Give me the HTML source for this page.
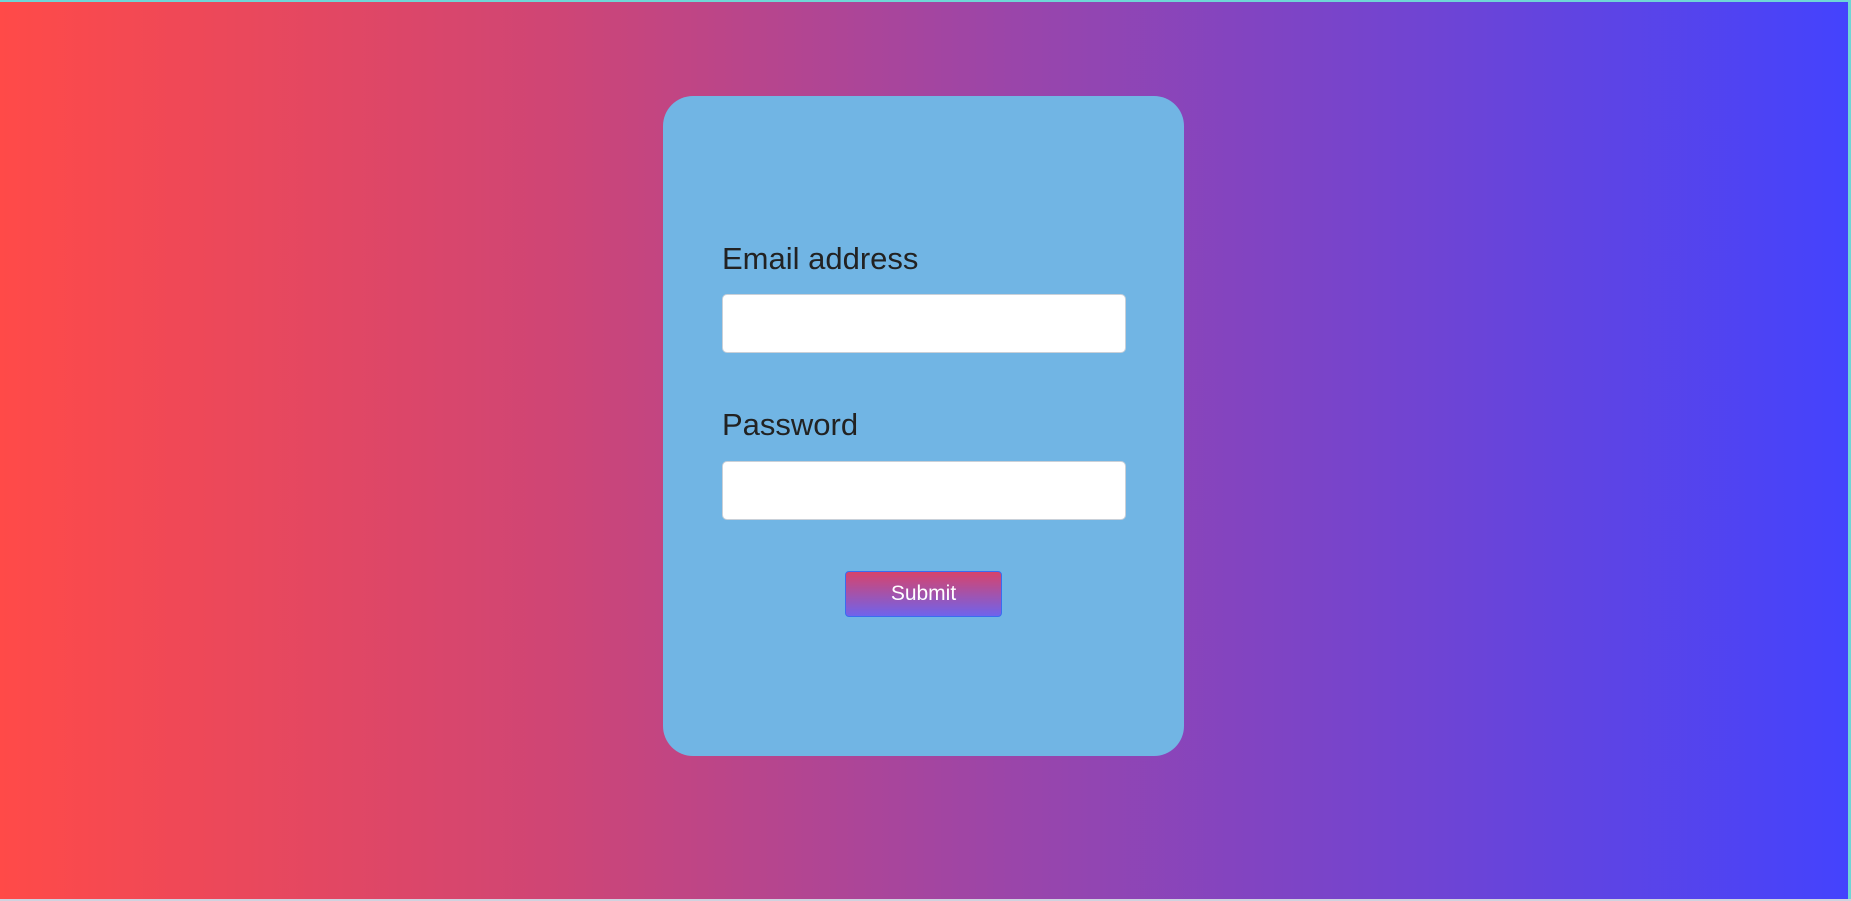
<!DOCTYPE html>
<html><head><style>
html,body{margin:0;padding:0;width:1851px;height:901px;overflow:hidden;background:#6fd6d6;}
.bg{position:absolute;left:0;top:2px;width:1848px;height:897px;background:linear-gradient(to right,#ff4a48,#cf4575 30%,#9a45aa 55%,#4443fd);}
.bot{position:absolute;left:0;top:899px;width:1851px;height:2px;background:#cfd3e0;}
.card{position:absolute;left:663px;top:96px;width:521px;height:660px;background:#71b5e4;border-radius:30px;}
label{position:absolute;left:59px;font:31px "Liberation Sans",Arial,sans-serif;color:#222;}
.in{position:absolute;left:59px;width:402px;height:57px;background:#fff;border:1px solid #c9d0d8;border-radius:5px;}
.btn{position:absolute;left:182px;top:475px;width:155px;height:44px;border:1px solid #3a6cf0;border-radius:4px;background:linear-gradient(#d7436b,#6f63ec);color:#fff;font:21px "Liberation Sans",Arial,sans-serif;text-align:center;line-height:44px;box-sizing:content-box;}
</style></head><body>
<div class="bg"></div><div class="bot"></div>
<div class="card">
<label style="top:145px">Email address</label>
<div class="in" style="top:198px"></div>
<label style="top:311px">Password</label>
<div class="in" style="top:365px"></div>
<div class="btn">Submit</div>
</div>
</body></html>
